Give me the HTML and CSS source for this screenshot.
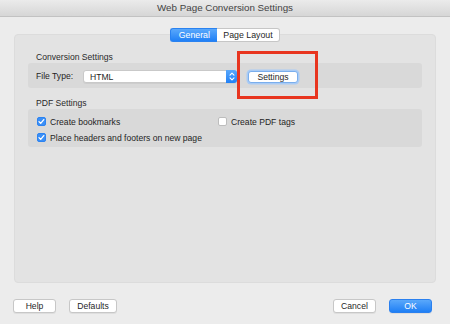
FILE: index.html
```html
<!DOCTYPE html>
<html lang="en">
<head>
  <meta charset="UTF-8" />
  <title>Web Page Conversion Settings</title>
  <link rel="stylesheet" href="styles.css">
</head>
<body>
  <div class="window">
    <div class="titlebar">Web Page Conversion Settings</div>

    <div class="content">
      <div class="panel">
        <div class="tabs">
          <span class="tab active">General</span>
          <span class="tab">Page Layout</span>
        </div>

        <!-- Conversion -->
        <div class="group-label">Conversion Settings</div>
        <div class="group conv-row">
          <span class="field-label">File Type:</span>
          <div class="select">
            <span>HTML</span>
            <span class="stepper">
              <svg width="6" height="9" viewBox="0 0 6 9">
                <path d="M1 3.2 L3 1.2 L5 3.2 M1 5.8 L3 7.8 L5 5.8" fill="none" stroke="#fff" stroke-width="1.1" stroke-linecap="round" stroke-linejoin="round"/>
              </svg>
            </span>
          </div>
          <button class="btn focus">Settings</button>
          <div class="highlight"></div>
        </div>

        <!-- PDF -->
        <div class="group-label">PDF Settings</div>
        <div class="group checks">
          <label class="check"><span class="box on"></span>Create bookmarks</label>
          <label class="check"><span class="box"></span>Create PDF tags</label>
          <label class="check wide"><span class="box on"></span>Place headers and footers on new page</label>
        </div>
      </div>
    </div>

    <div class="footer">
      <div class="btn-set">
        <button class="btn">Help</button>
        <button class="btn w48">Defaults</button>
      </div>
      <div class="btn-set">
        <button class="btn">Cancel</button>
        <button class="btn primary">OK</button>
      </div>
    </div>
  </div>
</body>
</html>
```

FILE: styles.css
```css
:root {
  --win-bg: #ececec;
  --panel-bg: #e3e3e3;
  --group-bg: #d9d9d9;
  --text: #1f1f1f;
  --mac-blue: #2a86f6;
}

body {
  margin: 0;
  background: var(--win-bg);
  font-family: 'Liberation Sans', Arial, sans-serif;
  font-size: 8.6px;
  color: var(--text);
}

.window {
  width: 450px;
  height: 324px;
  display: flex;
  flex-direction: column;
}

.titlebar {
  height: 16px;
  line-height: 16px;
  text-align: center;
  font-size: 9.8px;
  color: #444;
  background: linear-gradient(#ebebeb, #d6d6d6);
  border-bottom: 1px solid #c2c2c2;
}

.content {
  padding: 17px 14px 0;
}

.panel {
  height: 249px;
  box-sizing: border-box;
  padding: 0 13px;
  background: var(--panel-bg);
  border: 1px solid #dcdcdc;
  border-radius: 4px;
}

.tabs {
  display: flex;
  justify-content: center;
  margin-top: -7px;
}

.tab {
  height: 12px;
  line-height: 12px;
  padding: 0 6px;
  background: #fff;
  border: 1px solid #c6c6c6;
  font-size: 8.8px;
}

.tab:first-child {
  border-radius: 3px 0 0 3px;
  border-right: none;
}

.tab:last-child {
  border-radius: 0 3px 3px 0;
  border-left: none;
}

.tab.active {
  width: 34px;
  text-align: center;
  color: #fff;
  background: linear-gradient(#5aa8fb, #2080f6);
  border-color: #2a82f0;
}

.group-label {
  padding-left: 8px;
  margin-top: 10px;
  line-height: 11px;
  color: #2a2a2a;
}

.group {
  background: var(--group-bg);
  border-radius: 3px;
  box-sizing: border-box;
}

.conv-row {
  position: relative;
  height: 25px;
  padding: 0 8px;
  display: flex;
  align-items: center;
}

.field-label {
  width: 47px;
}

.select {
  width: 154px;
  height: 13px;
  box-sizing: border-box;
  margin-top: 2px;
  display: flex;
  align-items: center;
  justify-content: space-between;
  padding-left: 6px;
  background: #fff;
  border: 1px solid #c9c9c9;
  border-radius: 3px;
  box-shadow: 0 1px 0 rgba(0, 0, 0, 0.05);
}

.stepper {
  width: 11px;
  height: 13px;
  margin-right: -1px;
  display: flex;
  align-items: center;
  justify-content: center;
  background: linear-gradient(#5aa8fb, #2080f6);
  border-radius: 0 3px 3px 0;
}

.btn {
  font-family: inherit;
  font-size: 8.6px;
  color: var(--text);
  width: 43px;
  height: 14px;
  padding: 0;
  line-height: 12px;
  background: #fff;
  border: 1px solid #c7c7c7;
  border-radius: 3px;
  box-shadow: 0 1px 0 rgba(0, 0, 0, 0.06);
}

.btn.w48 {
  width: 48px;
}

.btn.focus {
  width: 50px;
  height: 12px;
  line-height: 10px;
  margin: 2px 0 0 11px;
  border-color: #7aaeed;
  box-shadow: 0 0 0 1.5px #a9cbf5;
}

.btn.primary {
  color: #fff;
  background: linear-gradient(#5aa8fb, #1f7ff5);
  border-color: #2a80ef;
}

/* red annotation box drawn over the screenshot */
.highlight {
  position: absolute;
  left: 209px;
  top: -12px;
  width: 75px;
  height: 42px;
  border: 3px solid #e8351f;
}

.checks {
  height: 38px;
  padding: 6px 9px 0;
  display: grid;
  grid-template-columns: 181px auto;
  grid-auto-rows: 13px;
  row-gap: 3px;
}

.check {
  display: flex;
  align-items: center;
  gap: 4px;
  white-space: nowrap;
}

.check.wide {
  grid-column: 1 / 3;
}

.box {
  width: 9px;
  height: 9px;
  box-sizing: border-box;
  background: #fff;
  border: 1px solid #bdbdbd;
  border-radius: 2px;
}

.box.on {
  border-color: #2c83f1;
  background: #3b8ff6 url("data:image/svg+xml;utf8,<svg xmlns='http://www.w3.org/2000/svg' width='9' height='9'><path d='M2 4.6 L3.7 6.3 L6.8 2.6' fill='none' stroke='white' stroke-width='1.3' stroke-linecap='round' stroke-linejoin='round'/></svg>") center / 9px 9px no-repeat;
}

.footer {
  display: flex;
  justify-content: space-between;
  padding: 16px 18px 0 13px;
}

.btn-set {
  display: flex;
  gap: 13px;
}
```
